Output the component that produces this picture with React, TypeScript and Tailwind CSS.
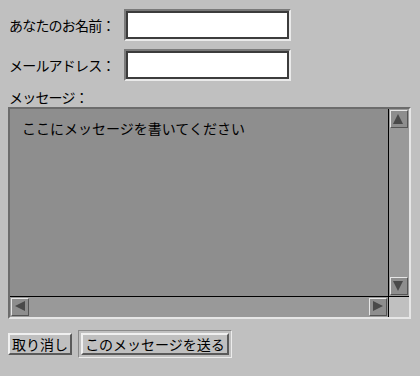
import React from 'react';

// ボタンの出っ張り枠（Motif風）
const bevelOut = 'border-t-2 border-l-2 border-b-2 border-r-2 border-t-[#f0f0f0] border-l-[#f0f0f0] border-b-[#5a5a5a] border-r-[#5a5a5a]';

const Arrow: React.FC<{ dir: 'up' | 'down' | 'left' | 'right' }> = ({ dir }) => {
    const pts = {
        up: '5,1 10,11 0,11',
        down: '0,1 10,1 5,11',
        left: '11,0 11,10 1,5',
        right: '1,0 1,10 11,5',
    }[dir];
    return (
        <div className="w-[18px] h-[18px] flex items-center justify-center bg-[#8e8e8e] border border-t-[#e6e6e6] border-l-[#e6e6e6] border-b-[#555] border-r-[#555]">
            <svg width="12" height="12" viewBox="0 0 12 12">
                <polygon points={pts} fill="#4a4a4a" />
            </svg>
        </div>
    );
};

const TextField: React.FC = () => (
    <div className="w-[167px] h-[32px] border-2 border-t-[#7a7a7a] border-l-[#7a7a7a] border-b-[#eaeaea] border-r-[#eaeaea]">
        <div className="w-full h-full border-2 border-t-[#3c3c3c] border-l-[#3c3c3c] border-b-[#3c3c3c] border-r-[#3c3c3c] bg-white" />
    </div>
);

const App: React.FC = () => {
    return (
        <div
            className="w-[420px] h-[376px] bg-[#c0c0c0] text-black text-[14px] leading-none overflow-hidden"
            style={{ fontFamily: '"Noto Sans CJK JP", "Noto Sans", sans-serif' }}
        >
            {/* 名前 */}
            <div className="flex items-center pt-[9px] pl-[9px]">
                <span className="w-[115px] tracking-[-0.8px]">あなたのお名前：</span>
                <TextField />
            </div>

            {/* メール */}
            <div className="flex items-center pt-[8px] pl-[9px]">
                <span className="w-[115px] tracking-[-0.8px]">メールアドレス：</span>
                <TextField />
            </div>

            <div className="pl-[9px] pt-[6px] h-[26px] flex items-center tracking-[-0.8px]">メッセージ：</div>

            {/* テキストエリア */}
            <div className="ml-[8px] w-[403px] h-[212px] border-2 border-t-[#6c6c6c] border-l-[#6c6c6c] border-b-[#e6e6e6] border-r-[#e6e6e6] flex flex-col">
                <div className="flex flex-1 min-h-0">
                    <div className="flex-1 bg-[#8e8e8e] border-r border-black pl-[12px] pt-[12px]">
                        ここにメッセージを書いてください
                    </div>
                    <div className="w-[20px] bg-[#999999] flex flex-col justify-between p-[1px] border-r border-[#999]">
                        <Arrow dir="up" />
                        <Arrow dir="down" />
                    </div>
                </div>
                <div className="flex h-[21px] border-t border-black">
                    <div className="flex-1 bg-[#999999] flex justify-between p-[1px] border-r border-black">
                        <Arrow dir="left" />
                        <Arrow dir="right" />
                    </div>
                    <div className="w-[20px] bg-[#c0c0c0]" />
                </div>
            </div>

            {/* ボタン */}
            <div className="flex items-center pl-[8px] pt-[11px] gap-[6px]">
                <button className={`h-[22px] w-[64px] flex items-center justify-center bg-[#c0c0c0] ${bevelOut}`}>
                    取り消し
                </button>
                <div className="p-[2px] border border-t-[#8a8a8a] border-l-[#8a8a8a] border-b-[#ececec] border-r-[#ececec]">
                    <button className={`h-[22px] w-[148px] flex items-center justify-center bg-[#c0c0c0] ${bevelOut}`}>
                        このメッセージを送る
                    </button>
                </div>
            </div>
        </div>
    );
};

export default App;
